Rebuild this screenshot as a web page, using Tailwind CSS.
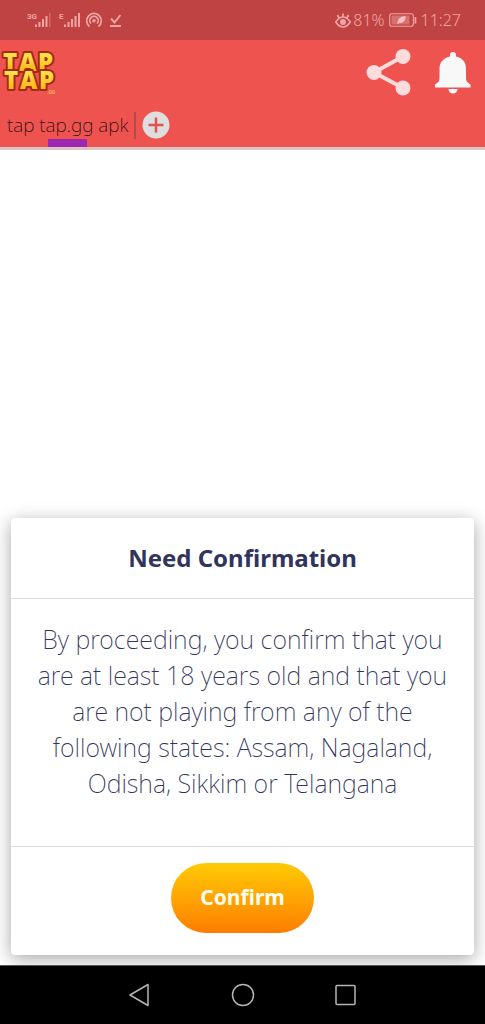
<!DOCTYPE html>
<html lang="en">
<head>
<meta charset="utf-8">
<meta name="viewport" content="width=device-width, initial-scale=1">
<title>Need Confirmation</title>
<script src="https://cdn.jsdelivr.net/npm/@tailwindcss/browser@4"></script>
</head>
<body class="min-h-screen flex flex-col bg-white font-['Noto_Sans','Open_Sans',sans-serif]">
<div class="h-10 flex items-center justify-between bg-[#c04343] pl-6 pr-6 text-[#f0a5a3]">
  <svg class="w-[100px] h-5" viewBox="0 0 100 20" fill="currentColor" role="img" aria-label="Signal, hotspot and download status">
    <text x="3" y="9" font-size="8" font-weight="700" font-family="Roboto, sans-serif">3G</text>
    <path d="M11 14.500h2V17h-2zM14.500 12h2v5h-2zM18 9h2v8h-2zM21.500 6h2v11h-2z"/>
    <path d="M25 3h1.500v14H25z" opacity=".35"/>
    <text x="35" y="9" font-size="8" font-weight="700" font-family="Roboto, sans-serif">E</text>
    <path d="M40 14.500h2V17h-2zM43.500 12h2v5h-2zM47 9h2v8h-2zM50.500 6h2v11h-2zM54 3h2v14h-2z"/>
    <g fill="none" stroke="currentColor" stroke-width="1.700">
      <path d="M65.500 16.500a7.300 7.300 0 1 1 9 0M67 13.500a4.200 4.200 0 1 1 6 0"/>
      <path d="M87 8.500l3.500 4L96.500 5M86 16h11" stroke-width="2"/>
    </g>
    <circle cx="70" cy="10.800" r="1.800"/>
  </svg>
  <div class="flex items-center gap-1 text-base font-light">
    <svg class="w-4 h-5 shrink-0" viewBox="0 0 16 20" fill="none" stroke="currentColor" stroke-width="1.700" role="img" aria-label="Eye comfort">
      <path d="M.8 12C3 8.500 5.500 7 8 7s5 1.500 7.200 5C13 15.500 10.500 17 8 17S3 15.500.8 12zM8 7V3.500M4 8L2.500 5M12 8l1.500-3"/>
      <circle cx="8" cy="12" r="3" fill="currentColor" stroke="none"/>
    </svg>
    <span class="-ml-0.5">81%</span>
    <svg class="w-7 h-4 shrink-0" viewBox="0 0 28 16" role="img" aria-label="Battery">
      <rect x=".7" y="1.700" width="23.600" height="12.600" rx="2" fill="none" stroke="currentColor" stroke-width="1.100"/>
      <rect x="2.500" y="3.500" width="18" height="9" fill="#d67170"/>
      <path d="M8.500 12.500C8 7.500 11 4.500 16.500 4c.2 5-2.500 7.500-6.500 7z" fill="#fbc0bd"/>
      <path d="M25.500 5h1.800v6.500h-1.800z" fill="currentColor"/>
    </svg>
    <time>11:27</time>
  </div>
</div>

<header class="bg-[#ef5350] border-b-3 border-[#dfc4c4]">
  <div class="h-16 flex items-center justify-between pr-3">
    <svg class="w-16 h-12" viewBox="0 0 64 48" role="img" aria-label="TAP TAP">
      <defs>
        <linearGradient id="gold" x1="0" y1="0" x2="0" y2="1">
          <stop offset=".3" stop-color="#ffe04a"/><stop offset=".8" stop-color="#fdb515"/>
        </linearGradient>
      </defs>
      <g font-family="'Noto Sans',sans-serif" font-weight="900" font-size="24" stroke-linejoin="round" fill="url(#gold)" stroke="#a32a15" stroke-width="4" style="paint-order:stroke">
        <text x="3 19 38" y="23 23 23">TAP</text>
        <text x="4 20 39" y="41 41 41">TAP</text>
      </g>
      <text x="47" y="46" font-size="5" font-weight="700" font-family="Roboto,sans-serif" fill="#ffb74d">.GG</text>
    </svg>
    <div class="flex items-center gap-5">
      <button type="button" aria-label="Share">
        <svg class="w-12 h-12" viewBox="0 0 48 48" fill="#ffdcdc">
          <path d="M38 8.500L9 24.500l29 15.500" fill="none" stroke="#ffdcdc" stroke-width="4"/>
          <circle cx="9" cy="24.500" r="7.500"/><circle cx="38" cy="8.500" r="7.500"/><circle cx="38" cy="40" r="7.500"/>
        </svg>
      </button>
      <button type="button" aria-label="Notifications">
        <svg class="w-10 h-12" viewBox="0 0 40 48" fill="#f8f8f8">
          <path d="M17 8.500V7a3 3 0 0 1 6 0v1.500c7 1.500 10 6 10 12.500v9c0 3 1 4.500 4.500 6.500v3H2v-3C5.500 34.500 6.500 33 6.500 30v-9C6.500 14.500 10 10 17 8.500zM15.500 41h9a4.500 4.500 0 0 1-9 0z"/>
        </svg>
      </button>
    </div>
  </div>
  <nav class="h-[43px] flex items-start pl-[7px]" aria-label="Tabs">
    <a href="#" class="flex flex-col items-center text-[19px] leading-[43px] font-extralight text-[#240b0b]">tap tap.gg apk<span class="-mt-2 w-[39px] h-2 bg-[#9c27b0]"></span></a>
    <span class="ml-1.5 mt-2 w-0.5 h-[27px] bg-[#a94f4d]"></span>
    <button type="button" aria-label="Add tab" class="ml-1.5 mt-[7px]">
      <svg class="size-7" viewBox="0 0 28 28">
        <circle cx="14" cy="14" r="13.500" fill="#dedede"/>
        <path d="M14 6.500v15M6.500 14h15" stroke="#e05351" stroke-width="2.500"/>
      </svg>
    </button>
  </nav>
</header>

<main class="flex-1 flex flex-col justify-end px-[11px] pb-2.5 overflow-hidden">
  <section role="dialog" aria-labelledby="title" class="rounded-sm bg-white text-center text-[#31345b] shadow-[0_4px_18px_rgba(0,0,0,0.35)]">
    <h1 id="title" class="h-20 flex items-center justify-center text-2xl font-bold">Need Confirmation</h1>
    <p class="border-y border-[#dedede] px-5 pt-[22px] pb-[45px] text-[25px] leading-9 font-extralight">By proceeding, you confirm that you are at least 18 years old and that you are not playing from any of the following states: Assam, Nagaland, Odisha, Sikkim or Telangana</p>
    <div class="flex justify-center pt-4 pb-[22px]">
      <button type="button" class="w-[143px] h-[70px] rounded-full bg-linear-to-b from-[#ffca05] to-[#fc7d00] text-[21px] font-bold text-[#fffdf0]">Confirm</button>
    </div>
  </section>
</main>

<footer class="h-[59px] flex items-center justify-center gap-[79px] bg-black border-t border-[#555]">
  <button type="button" aria-label="Back"><svg class="size-6" viewBox="0 0 24 24" fill="none" stroke="#b5b5b5" stroke-width="1.500" stroke-linejoin="round"><path d="M20 1.500v21L2 12z"/></svg></button>
  <button type="button" aria-label="Home"><svg class="size-6" viewBox="0 0 24 24" fill="none" stroke="#b5b5b5" stroke-width="1.500"><circle cx="12" cy="12" r="10.500"/></svg></button>
  <button type="button" aria-label="Recent apps"><svg class="size-6" viewBox="0 0 24 24" fill="none" stroke="#b5b5b5" stroke-width="1.500"><rect x="2" y="2.500" width="19" height="19" rx="1"/></svg></button>
</footer>
</body>
</html>
